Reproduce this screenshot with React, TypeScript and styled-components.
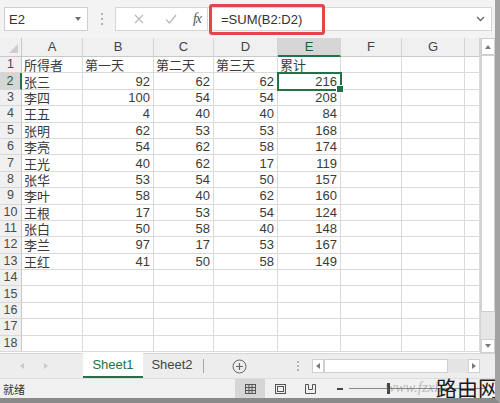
import React from "react";
import styled, { createGlobalStyle } from "styled-components";

const GREEN = "#217346";
const SANS = `"Liberation Sans", "Noto Sans CJK SC", sans-serif`;
const CJK = `"Noto Sans CJK SC", "Liberation Sans", sans-serif`;

const columns = ["A", "B", "C", "D", "E", "F", "G", ""];
const colWidths = [22, 61, 71, 60, 64, 63, 61, 63, 15];
const ROW_COUNT = 18;

const heading = ["所得者", "第一天", "第二天", "第三天", "累计"];

const scores: [string, number, number, number][] = [
  ["张三", 92, 62, 62],
  ["李四", 100, 54, 54],
  ["王五", 4, 40, 40],
  ["张明", 62, 53, 53],
  ["李亮", 54, 62, 58],
  ["王光", 40, 62, 17],
  ["张华", 53, 54, 50],
  ["李叶", 58, 40, 62],
  ["王根", 17, 53, 54],
  ["张白", 50, 58, 40],
  ["李兰", 97, 17, 53],
  ["王红", 41, 50, 58],
];

const GlobalStyle = createGlobalStyle`
  html, body {
    margin: 0;
    padding: 0;
    background: #f3f3f3;
    font-family: ${SANS};
  }
  * { box-sizing: border-box; }
`;

const Window = styled.div`
  width: 500px;
  height: 403px;
  display: flex;
  flex-direction: column;
  background: #f3f3f3;
  border-right: 5px solid #a2a2a2;
  border-bottom: 5px solid #8a8a8a;
  overflow: hidden;
  position: relative;
`;

/* ---------- formula bar ---------- */

const FormulaBar = styled.div`
  height: 38px;
  flex: none;
  display: flex;
  align-items: center;
  padding: 0 3px 0 4px;
`;

const NameBox = styled.div`
  width: 84px;
  height: 24px;
  background: #fff;
  border: 1px solid #cfcfcf;
  display: flex;
  align-items: center;
  justify-content: space-between;
  padding: 0 4px 0 4px;
  font-size: 13px;
  color: #333;
`;

const DropTriangle = styled.span`
  width: 0;
  height: 0;
  border-left: 3.5px solid transparent;
  border-right: 3.5px solid transparent;
  border-top: 4px solid #707070;
  margin-right: 2px;
`;

const Grip = styled.div`
  width: 27px;
  display: flex;
  flex-direction: column;
  align-items: center;
  gap: 3px;

  span {
    width: 2px;
    height: 2px;
    background: #b4b4b4;
  }
`;

const FuncBox = styled.div`
  width: 93px;
  height: 24px;
  background: #fff;
  border: 1px solid #d6d6d6;
  display: flex;
  align-items: center;
  padding-left: 8px;
`;

const FuncIcon = styled.span<{ $w: number }>`
  width: ${(p) => p.$w}px;
  display: flex;
  justify-content: center;
  color: #b8b8b8;
`;

const Fx = styled.span`
  font-family: "Liberation Serif", serif;
  font-style: italic;
  font-size: 14px;
  color: #555;
  letter-spacing: -1px;
`;

const FormulaInput = styled.div`
  flex: 1;
  height: 24px;
  background: #fff;
  border: 1px solid #d6d6d6;
  border-left: none;
  display: flex;
  align-items: center;
  justify-content: space-between;
  padding: 0 6px 0 1px;
`;

const FormulaText = styled.span`
  height: 31px;
  display: flex;
  align-items: center;
  border: 3px solid #e2454b;
  border-radius: 3px;
  padding: 0 20px 0 9px;
  font-size: 13px;
  color: #333;
`;

/* ---------- sheet ---------- */

const SheetArea = styled.div`
  height: 315px;
  flex: none;
  display: flex;
`;

const Grid = styled.div`
  width: 480px;
  display: grid;
  grid-template-columns: ${colWidths.map((w) => `${w}px`).join(" ")};
  grid-template-rows: 19px repeat(${ROW_COUNT}, 16.4px);
  background: #fff;
  overflow: hidden;
`;

const Corner = styled.div`
  background: #f0f0f0;
  border-right: 1px solid #c9c9c9;
  border-bottom: 1px solid #c9c9c9;
  display: flex;
  align-items: flex-end;
  justify-content: flex-end;
  padding: 0 3px 3px 0;

  &::after {
    content: "";
    width: 0;
    height: 0;
    border-left: 9px solid transparent;
    border-bottom: 9px solid #cdcdcd;
  }
`;

const ColHead = styled.div<{ $active?: boolean }>`
  background: ${(p) => (p.$active ? "#d6d6d6" : "#f0f0f0")};
  border-right: 1px solid #d4d4d4;
  border-bottom: ${(p) => (p.$active ? `2px solid ${GREEN}` : "1px solid #c9c9c9")};
  display: flex;
  align-items: center;
  justify-content: center;
  font-size: 13px;
  line-height: 16px;
  color: ${(p) => (p.$active ? "#1d5e3a" : "#444")};
`;

const RowHead = styled.div<{ $active?: boolean }>`
  background: ${(p) => (p.$active ? "#d6d6d6" : "#f0f0f0")};
  border-right: ${(p) => (p.$active ? `2px solid ${GREEN}` : "1px solid #c9c9c9")};
  border-bottom: 1px solid #d8d8d8;
  display: flex;
  align-items: center;
  justify-content: center;
  font-size: 12.5px;
  line-height: 15px;
  color: ${(p) => (p.$active ? "#1d5e3a" : "#4a4a4a")};
`;

const Cell = styled.div<{ $num?: boolean; $selected?: boolean }>`
  position: relative;
  border-right: 1px solid #dadada;
  border-bottom: 1px solid #dadada;
  display: flex;
  align-items: center;
  justify-content: ${(p) => (p.$num ? "flex-end" : "flex-start")};
  padding: 0 3px 0 2px;
  font-family: ${(p) => (p.$num ? SANS : CJK)};
  font-size: 13px;
  line-height: 15px;
  color: #3a3a3a;
  white-space: nowrap;
  ${(p) =>
    p.$selected &&
    `
    outline: 2px solid ${GREEN};
    outline-offset: -1px;
    z-index: 1;
    &::after {
      content: "";
      position: absolute;
      right: -4px;
      bottom: -4px;
      width: 6px;
      height: 6px;
      background: ${GREEN};
      border: 1px solid #fff;
    }
  `}
`;

const VScroll = styled.div`
  width: 15px;
  display: flex;
  flex-direction: column;
  background: #e6e6e6;
  border-left: 1px solid #d4d4d4;
`;

const ScrollArrow = styled.div<{ $h?: number }>`
  height: ${(p) => p.$h ?? 15}px;
  flex: none;
  display: flex;
  align-items: center;
  justify-content: center;
  background: #fff;
  border: 1px solid #d0d0d0;
`;

const Tri = styled.span<{ $dir: "up" | "down" | "left" | "right"; $color?: string }>`
  width: 0;
  height: 0;
  ${(p) => {
    const c = p.$color ?? "#7a7a7a";
    switch (p.$dir) {
      case "up":
        return `border-left: 3px solid transparent; border-right: 3px solid transparent; border-bottom: 4px solid ${c};`;
      case "down":
        return `border-left: 3px solid transparent; border-right: 3px solid transparent; border-top: 4px solid ${c};`;
      case "left":
        return `border-top: 3px solid transparent; border-bottom: 3px solid transparent; border-right: 4px solid ${c};`;
      default:
        return `border-top: 3px solid transparent; border-bottom: 3px solid transparent; border-left: 4px solid ${c};`;
    }
  }}
`;

const ScrollThumb = styled.div<{ $size: number }>`
  flex: none;
  background: #fff;
  border: 1px solid #cfcfcf;
  ${(p) => `flex-basis: ${p.$size}px;`}
`;

const Track = styled.div`
  flex: 1;
`;

/* ---------- sheet tabs ---------- */

const TabBar = styled.div`
  height: 25px;
  flex: none;
  display: flex;
  align-items: stretch;
  background: #ededed;
  border-top: 1px solid #d6d6d6;
`;

const TabNav = styled.div`
  width: 83px;
  display: flex;
  align-items: center;
  gap: 20px;
  padding-left: 20px;
`;

const Tab = styled.div<{ $active?: boolean }>`
  width: ${(p) => (p.$active ? 60 : 58)}px;
  display: flex;
  align-items: center;
  justify-content: center;
  font-size: 13px;
  color: ${(p) => (p.$active ? GREEN : "#444")};
  background: ${(p) => (p.$active ? "#fff" : "transparent")};
  border-bottom: ${(p) => (p.$active ? `2px solid ${GREEN}` : "2px solid transparent")};
  margin-top: -1px;
`;

const TabDivider = styled.div`
  width: 1px;
  height: 14px;
  align-self: center;
  background: #a8a8a8;
  margin-left: 2px;
`;

const AddSheet = styled.div`
  width: 70px;
  display: flex;
  align-items: center;
  justify-content: center;
`;

const Dots = styled.div`
  width: 28px;
  display: flex;
  flex-direction: column;
  align-items: center;
  justify-content: center;
  gap: 2px;
  margin-left: auto;

  span {
    width: 2px;
    height: 2px;
    background: #b4b4b4;
  }
`;

const HScroll = styled.div`
  width: 168px;
  height: 14px;
  align-self: center;
  display: flex;
  background: #e4e4e4;
  margin-right: 15px;
`;

const HArrow = styled.div`
  width: 12px;
  display: flex;
  align-items: center;
  justify-content: center;
  background: #fff;
  border: 1px solid #d0d0d0;
`;

/* ---------- status bar ---------- */

const StatusBar = styled.div`
  height: 20px;
  flex: none;
  display: flex;
  align-items: center;
  background: #f0f0f0;
  border-top: 1px solid #dedede;
  font-family: ${CJK};
  font-size: 11px;
  color: #333;
  padding-left: 3px;
`;

const Ready = styled.span`
  flex: 1;
`;

const ViewButton = styled.div<{ $active?: boolean }>`
  width: 30px;
  height: 100%;
  display: flex;
  align-items: center;
  justify-content: center;
  background: ${(p) => (p.$active ? "#d6d6d6" : "transparent")};
`;

const ZoomBar = styled.div`
  width: 170px;
  display: flex;
  align-items: center;
  gap: 6px;
  padding: 0 10px 0 12px;
`;

const ZoomLine = styled.div`
  position: relative;
  flex: 1;
  height: 1px;
  background: #8a8a8a;

  &::after {
    content: "";
    position: absolute;
    left: 38px;
    top: -5px;
    width: 3px;
    height: 11px;
    background: #444;
  }
`;

const Minus = styled.span`
  width: 6px;
  height: 2px;
  background: #444;
`;

const Watermark = styled.div`
  position: absolute;
  right: -4px;
  bottom: -2px;
  display: flex;
  align-items: flex-end;
  pointer-events: none;
`;

const WaterUrl = styled.span`
  font-family: "Liberation Serif", serif;
  font-style: italic;
  font-size: 15px;
  color: rgba(110, 110, 110, 0.45);
  margin-right: -6px;
  margin-bottom: 4px;
`;

const WaterName = styled.span`
  font-family: ${CJK};
  font-size: 21px;
  color: #1a1a1a;
  line-height: 26px;
`;

const NormalViewIcon = () => (
  <svg width="11" height="10" viewBox="0 0 11 10">
    <rect x="0.5" y="0.5" width="10" height="9" fill="none" stroke="#555" />
    <path d="M0.5 3.5h10M0.5 6.5h10M4 0.5v9M7 0.5v9" stroke="#555" />
  </svg>
);

const PageLayoutIcon = () => (
  <svg width="11" height="10" viewBox="0 0 11 10">
    <rect x="0.5" y="0.5" width="10" height="9" fill="none" stroke="#555" />
    <rect x="2.5" y="2.5" width="6" height="5" fill="none" stroke="#555" />
  </svg>
);

const PageBreakIcon = () => (
  <svg width="11" height="10" viewBox="0 0 11 10">
    <path d="M0.5 0.5v9h10v-9M0.5 0.5h3v5h4v-5h3" fill="none" stroke="#555" />
  </svg>
);

const App: React.FC = () => {
  const rows: (string | number)[][] = [
    heading,
    ...scores.map(([name, a, b, c]) => [name, a, b, c, a + b + c]),
  ];

  return (
    <>
      <GlobalStyle />
      <Window>
        <FormulaBar>
          <NameBox>
            E2
            <DropTriangle />
          </NameBox>
          <Grip>
            <span />
            <span />
            <span />
          </Grip>
          <FuncBox>
            <FuncIcon $w={30}>
              <svg width="10" height="10" viewBox="0 0 10 10">
                <path d="M1 1l8 8M9 1l-8 8" stroke="currentColor" strokeWidth="1.2" />
              </svg>
            </FuncIcon>
            <FuncIcon $w={34}>
              <svg width="12" height="10" viewBox="0 0 12 10">
                <path d="M1 5.5l3.5 3.5L11 1" fill="none" stroke="currentColor" strokeWidth="1.2" />
              </svg>
            </FuncIcon>
            <FuncIcon $w={18}>
              <Fx>fx</Fx>
            </FuncIcon>
          </FuncBox>
          <FormulaInput>
            <FormulaText>=SUM(B2:D2)</FormulaText>
            <svg width="9" height="6" viewBox="0 0 9 6">
              <path d="M1 1l3.5 3.5L8 1" fill="none" stroke="#666" strokeWidth="1.3" />
            </svg>
          </FormulaInput>
        </FormulaBar>

        <SheetArea>
          <Grid>
            <Corner />
            {columns.map((c, i) => (
              <ColHead key={i} $active={c === "E"}>
                {c}
              </ColHead>
            ))}
            {Array.from({ length: ROW_COUNT }, (_, r) => (
              <React.Fragment key={r}>
                <RowHead $active={r === 1}>{r + 1}</RowHead>
                {columns.map((_, c) => {
                  const value = rows[r]?.[c];
                  return (
                    <Cell
                      key={c}
                      $num={typeof value === "number"}
                      $selected={r === 1 && c === 4}
                    >
                      {value}
                    </Cell>
                  );
                })}
              </React.Fragment>
            ))}
          </Grid>
          <VScroll>
            <ScrollArrow $h={17}>
              <Tri $dir="up" />
            </ScrollArrow>
            <ScrollThumb $size={257} />
            <Track />
            <ScrollArrow $h={14}>
              <Tri $dir="down" />
            </ScrollArrow>
          </VScroll>
        </SheetArea>

        <TabBar>
          <TabNav>
            <Tri $dir="left" $color="#c9c9c9" />
            <Tri $dir="right" $color="#c9c9c9" />
          </TabNav>
          <Tab $active>Sheet1</Tab>
          <Tab>Sheet2</Tab>
          <TabDivider />
          <AddSheet>
            <svg width="15" height="15" viewBox="0 0 15 15">
              <circle cx="7.5" cy="7.5" r="6.5" fill="none" stroke="#666" />
              <path d="M7.5 4v7M4 7.5h7" stroke="#666" strokeWidth="1.2" />
            </svg>
          </AddSheet>
          <Dots>
            <span />
            <span />
            <span />
          </Dots>
          <HScroll>
            <HArrow>
              <Tri $dir="left" />
            </HArrow>
            <ScrollThumb $size={124} />
            <Track />
            <HArrow>
              <Tri $dir="right" />
            </HArrow>
          </HScroll>
        </TabBar>

        <StatusBar>
          <Ready>就绪</Ready>
          <ViewButton $active>
            <NormalViewIcon />
          </ViewButton>
          <ViewButton>
            <PageLayoutIcon />
          </ViewButton>
          <ViewButton>
            <PageBreakIcon />
          </ViewButton>
          <ZoomBar>
            <Minus />
            <ZoomLine />
          </ZoomBar>
        </StatusBar>

        <Watermark>
          <WaterUrl>www.fzxh</WaterUrl>
          <WaterName>路由网</WaterName>
        </Watermark>
      </Window>
    </>
  );
};

export default App;
